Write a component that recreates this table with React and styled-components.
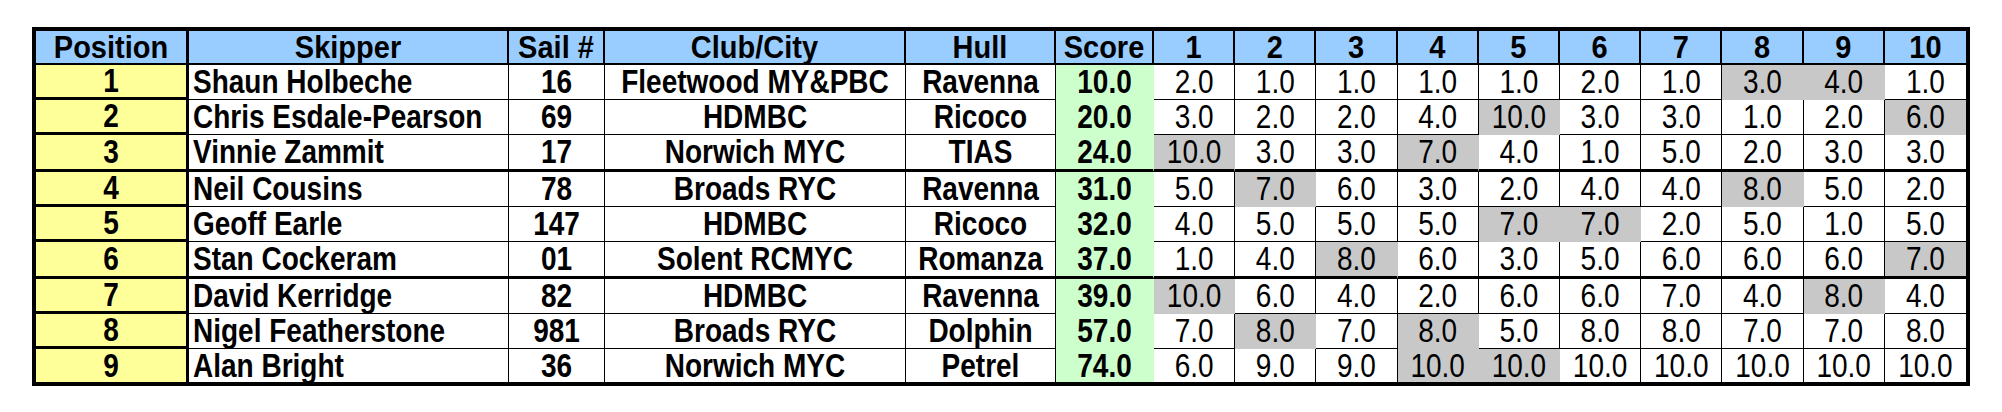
import React from "react"
import styled, { createGlobalStyle } from "styled-components"

const races = ["1", "2", "3", "4", "5", "6", "7", "8", "9", "10"]

// drop = indexes of discarded races (shown grey)
const results = [
  { pos: 1, skipper: "Shaun Holbeche", sail: "16", club: "Fleetwood MY&PBC", hull: "Ravenna", score: "10.0", r: [2, 1, 1, 1, 1, 2, 1, 3, 4, 1], drop: [7, 8] },
  { pos: 2, skipper: "Chris Esdale-Pearson", sail: "69", club: "HDMBC", hull: "Ricoco", score: "20.0", r: [3, 2, 2, 4, 10, 3, 3, 1, 2, 6], drop: [4, 9] },
  { pos: 3, skipper: "Vinnie Zammit", sail: "17", club: "Norwich MYC", hull: "TIAS", score: "24.0", r: [10, 3, 3, 7, 4, 1, 5, 2, 3, 3], drop: [0, 3] },
  { pos: 4, skipper: "Neil Cousins", sail: "78", club: "Broads RYC", hull: "Ravenna", score: "31.0", r: [5, 7, 6, 3, 2, 4, 4, 8, 5, 2], drop: [1, 7] },
  { pos: 5, skipper: "Geoff Earle", sail: "147", club: "HDMBC", hull: "Ricoco", score: "32.0", r: [4, 5, 5, 5, 7, 7, 2, 5, 1, 5], drop: [4, 5] },
  { pos: 6, skipper: "Stan Cockeram", sail: "01", club: "Solent RCMYC", hull: "Romanza", score: "37.0", r: [1, 4, 8, 6, 3, 5, 6, 6, 6, 7], drop: [2, 9] },
  { pos: 7, skipper: "David Kerridge", sail: "82", club: "HDMBC", hull: "Ravenna", score: "39.0", r: [10, 6, 4, 2, 6, 6, 7, 4, 8, 4], drop: [0, 8] },
  { pos: 8, skipper: "Nigel Featherstone", sail: "981", club: "Broads RYC", hull: "Dolphin", score: "57.0", r: [7, 8, 7, 8, 5, 8, 8, 7, 7, 8], drop: [1, 3] },
  { pos: 9, skipper: "Alan Bright", sail: "36", club: "Norwich MYC", hull: "Petrel", score: "74.0", r: [6, 9, 9, 10, 10, 10, 10, 10, 10, 10], drop: [3, 4] },
]

const fills = {
  head: "#99ccff",
  pos: "#ffff99",
  score: "#ccffcc",
  drop: "#c8c8c8",
  plain: "#ffffff",
}

const GlobalStyle = createGlobalStyle`
  body {
    margin: 0;
    background: #fff;
    font-family: "Liberation Sans", Arial, Helvetica, sans-serif;
    color: #000;
  }
`

const Board = styled.div`
  box-sizing: border-box;
  width: 1938px;
  margin: 27px 0 0 32px;
  display: grid;
  grid-template-columns: 153px 320px 96px 301px 150px 98px repeat(10, 1fr);
  border: 4px solid #000;
`

const Cell = styled.div`
  box-sizing: border-box;
  height: ${(p) => p.$h}px;
  display: flex;
  align-items: center;
  justify-content: ${(p) => (p.$left ? "flex-start" : "center")};
  padding: 0 ${(p) => (p.$left ? "4px" : "2px")};
  background: ${(p) => fills[p.$tone]};
  border-right: ${(p) => p.$right};
  border-bottom: ${(p) => p.$bottom};
  font-size: 28px;
  font-weight: ${(p) => (p.$light ? 400 : 700)};
  white-space: nowrap;
`

const HeadCell = styled(Cell)`
  font-size: 29px;
`

const Label = styled.span`
  display: inline-block;
  line-height: 1;
  transform: scaleY(${(p) => p.$sy || 1.18});
`

const line = (w, c = "#000") => (w ? `${w}px solid ${c}` : "none")

export default function App() {
  const heads = ["Position", "Skipper", "Sail #", "Club/City", "Hull", "Score", ...races]
  return (
    <>
      <GlobalStyle />
      <Board>
        {heads.map((h, i) => (
          <HeadCell
            key={h}
            $h={34}
            $tone="head"
            $right={i === heads.length - 1 ? "none" : line(i === 0 ? 3 : 2)}
            $bottom={line(2)}
          >
            <Label $sy={1.08}>{h}</Label>
          </HeadCell>
        ))}
        {results.map((row, ri) => {
          const last = ri === results.length - 1
          const group = ri === 2 || ri === 5
          const h = last ? 33 : group ? 37 : 35
          const bottom = (tone) =>
            last ? "none" : group ? line(3) : tone === "plain" ? line(1) : line(1, fills[tone])
          const text = [
            { v: row.skipper, left: true },
            { v: row.sail },
            { v: row.club },
            { v: row.hull },
          ]
          return (
            <React.Fragment key={row.pos}>
              <Cell $h={h} $tone="pos" $right={line(3)} $bottom={last ? "none" : line(3)}>
                <Label>{row.pos}</Label>
              </Cell>
              {text.map((t, ti) => (
                <Cell key={ti} $h={h} $tone="plain" $left={t.left} $right={line(1)} $bottom={bottom("plain")}>
                  <Label>{t.v}</Label>
                </Cell>
              ))}
              <Cell $h={h} $tone="score" $right={line(1, fills.score)} $bottom={bottom("score")}>
                <Label>{row.score}</Label>
              </Cell>
              {row.r.map((v, ci) => {
                const tone = row.drop.includes(ci) ? "drop" : "plain"
                const endCol = ci === row.r.length - 1
                return (
                  <Cell
                    key={ci}
                    $h={h}
                    $tone={tone}
                    $light
                    $right={endCol ? "none" : line(1, tone === "drop" ? fills.drop : "#000")}
                    $bottom={bottom(tone)}
                  >
                    <Label>{v.toFixed(1)}</Label>
                  </Cell>
                )
              })}
            </React.Fragment>
          )
        })}
      </Board>
    </>
  )
}
